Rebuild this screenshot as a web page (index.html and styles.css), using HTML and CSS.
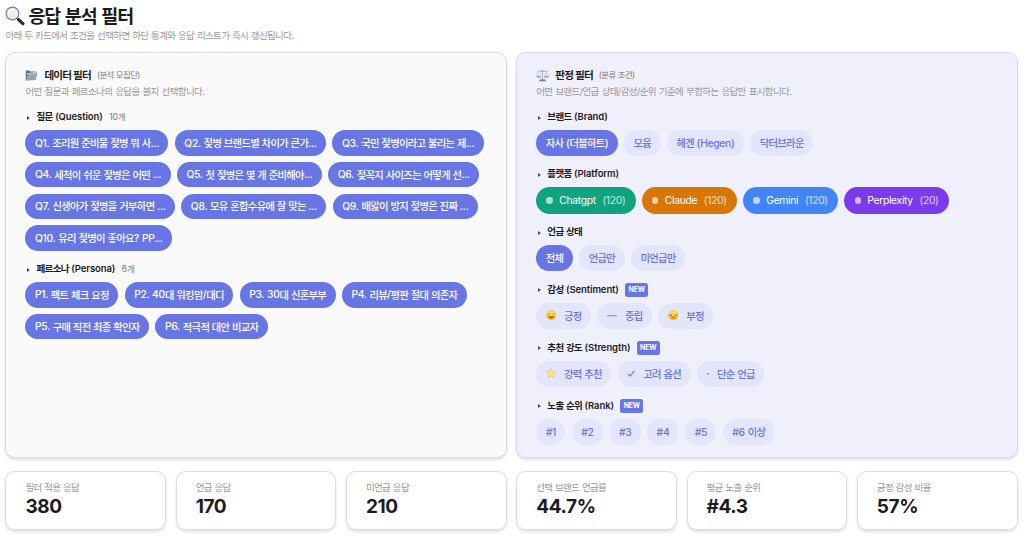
FILE: index.html
```html
<!DOCTYPE html>
<html lang="ko">
<head>
    <meta charset="UTF-8">
    <meta name="viewport" content="width=device-width, initial-scale=1.0">
    <title>응답 분석 필터</title>
    <link rel="stylesheet" href="styles.css">
</head>
<body>

    <header>
        <h1>
            <svg class="icon-search" viewBox="0 0 20 20">
                <path d="M12.2 12.2l1.7 1.7" stroke="#777" stroke-width="1.6"/>
                <path d="M13.6 13.6l4.3 4" stroke="#222" stroke-width="3.2" stroke-linecap="round"/>
                <path d="M13.9 13.2l4 3.7" stroke="#777" stroke-width=".6" stroke-linecap="round"/>
                <circle cx="7.5" cy="7.5" r="6.4" fill="#e9f1f6" stroke="#6d7478" stroke-width="1.1"/>
                <circle cx="7.5" cy="7.5" r="5.5" fill="none" stroke="#c9d0d4" stroke-width=".6"/>
                <path d="M4 7.2a4 4 0 0 1 3.6-3.6" fill="none" stroke="#fff" stroke-width="1.2" stroke-linecap="round"/>
            </svg>
            <span>응답 분석 필터</span>
        </h1>
        <p class="subtitle">아래 두 카드에서 조건을 선택하면 하단 통계와 응답 리스트가 즉시 갱신됩니다.</p>
    </header>

    <main class="filters">
        <section class="card">
            <h2>
                <svg class="icon-card" viewBox="0 0 13 13">
                  <path d="M.7 11.5V2.3q0-.8.8-.8h2.7l1 1h5.3q.8 0 .8.8v1.5z" fill="#61717d"/>
                  <path d="M2 4.2l9-1.1v2H2z" fill="#f4f6f7"/>
                  <path d="M.8 11.8L2.6 5q.2-.6.9-.7l8.5-.8q.7 0 .5.7l-1.7 6.2q-.2.6-.8.7z" fill="#91a5b2"/>
                  <path d="M2.9 5.2l9-.9" stroke="#bdcbd3" stroke-width=".7"/>
                </svg>
                <span>데이터 필터</span>
                <small>(분석 모집단)</small>
            </h2>
            <p class="desc">어떤 질문과 페르소나의 응답을 볼지 선택합니다.</p>

            <div class="group">
                <h3><i class="arrow"></i><span>질문 <b>(Question)</b></span><small><b>10</b>개</small></h3>
                <div class="chips">
                    <button class="chip on"><b>Q1. </b>조리원 준비물 젖병 뭐 사<b>...</b></button>
                    <button class="chip on"><b>Q2. </b>젖병 브랜드별 차이가 큰가<b>...</b></button>
                    <button class="chip on"><b>Q3. </b>국민 젖병이라고 불리는 제<b>...</b></button>
                    <button class="chip on"><b>Q4. </b>세척이 쉬운 젖병은 어떤 <b>...</b></button>
                    <button class="chip on"><b>Q5. </b>첫 젖병은 몇 개 준비해야<b>...</b></button>
                    <button class="chip on"><b>Q6. </b>젖꼭지 사이즈는 어떻게 선<b>...</b></button>
                    <button class="chip on"><b>Q7. </b>신생아가 젖병을 거부하면 <b>...</b></button>
                    <button class="chip on"><b>Q8. </b>모유 혼합수유에 잘 맞는 <b>...</b></button>
                    <button class="chip on"><b>Q9. </b>배앓이 방지 젖병은 진짜 <b>...</b></button>
                    <button class="chip on"><b>Q10. </b>유리 젖병이 좋아요<b>? PP...</b></button>
                </div>
            </div>

            <div class="group">
                <h3><i class="arrow"></i><span>페르소나 <b>(Persona)</b></span><small><b>6</b>개</small></h3>
                <div class="chips">
                    <button class="chip on"><b>P1. </b>팩트 체크 요정</button>
                    <button class="chip on"><b>P2. 40</b>대 워킹맘<b>/</b>대디</button>
                    <button class="chip on"><b>P3. 30</b>대 신혼부부</button>
                    <button class="chip on"><b>P4. </b>리뷰<b>/</b>평판 절대 의존자</button>
                    <button class="chip on"><b>P5. </b>구매 직전 최종 확인자</button>
                    <button class="chip on"><b>P6. </b>적극적 대안 비교자</button>
                </div>
            </div>
        </section>

        <section class="card judge">
            <h2>
                <svg class="icon-card" viewBox="0 0 13 13" fill="none" stroke="#8195a5" stroke-width=".7">
                    <path d="M6.5.6v10M1.5 2.3h10"/>
                    <path d="M2.7 2.3L.8 7.2M2.7 2.3l1.9 4.9M10.3 2.3L8.4 7.2M10.3 2.3l1.9 4.9" stroke="#a9b7c2" stroke-width=".5"/>
                    <path d="M.5 7.2h4.3q-.4 1.4-2.1 1.4T.5 7.2zM8.2 7.2h4.3q-.4 1.4-2.1 1.4T8.2 7.2z" fill="#c3ced6"/>
                    <path d="M3.2 12.1h6.6l-1-1.5H4.2z" fill="#71818e"/>
                </svg>
                <span>판정 필터</span>
                <small>(분류 조건)</small>
            </h2>
            <p class="desc">어떤 브랜드/언급 상태/감성/순위 기준에 부합하는 응답만 표시합니다.</p>

            <div class="group">
                <h3><i class="arrow"></i><span>브랜드 <b>(Brand)</b></span></h3>
                <div class="chips">
                    <button class="chip on">자사 <b>(</b>더블하트<b>)</b></button>
                    <button class="chip">모윰</button>
                    <button class="chip">헤겐 <b>(Hegen)</b></button>
                    <button class="chip">닥터브라운</button>
                </div>
            </div>

            <div class="group">
                <h3><i class="arrow"></i><span>플랫폼 <b>(Platform)</b></span></h3>
                <div class="chips">
                    <button class="chip platform chatgpt"><i class="dot"></i><b>Chatgpt</b><b class="count">(120)</b></button>
                    <button class="chip platform claude"><i class="dot"></i><b>Claude</b><b class="count">(120)</b></button>
                    <button class="chip platform gemini"><i class="dot"></i><b>Gemini</b><b class="count">(120)</b></button>
                    <button class="chip platform perplexity"><i class="dot"></i><b>Perplexity</b><b class="count">(20)</b></button>
                </div>
            </div>

            <div class="group">
                <h3><i class="arrow"></i><span>언급 상태</span></h3>
                <div class="chips">
                    <button class="chip on">전체</button>
                    <button class="chip">언급만</button>
                    <button class="chip">미언급만</button>
                </div>
            </div>

            <div class="group">
                <h3><i class="arrow"></i><span>감성 <b>(Sentiment)</b></span><em class="new">NEW</em></h3>
                <div class="chips">
                    <button class="chip with-icon">
                        <svg viewBox="0 0 10 10">
                            <circle cx="5" cy="5" r="4.8" fill="#fbb829"/>
                            <ellipse cx="5" cy="3" rx="3.6" ry="2.4" fill="#ffdc55"/>
                            <path d="M2.4 4q.7-1 1.4 0M6.2 4q.7-1 1.4 0" fill="none" stroke="#704018" stroke-width=".7"/>
                            <path d="M2.3 5.8q2.7 1.2 5.4 0Q7 8 5 8T2.3 5.8z" fill="#86471a"/>
                        </svg>긍정
                    </button>
                    <button class="chip with-icon">
                        <svg viewBox="0 0 10 10"><path d="M0 5.5h10" stroke="#6f7be8" stroke-width=".9"/></svg>중립
                    </button>
                    <button class="chip with-icon">
                        <svg viewBox="0 0 10 10">
                            <circle cx="5" cy="5" r="4.8" fill="#fbb42a"/>
                            <ellipse cx="5" cy="3" rx="3.6" ry="2.4" fill="#ffdc5c"/>
                            <path d="M1.9 4.6q1 .7 2 0M6.1 4.6q1 .7 2 0" fill="none" stroke="#704018" stroke-width=".8"/>
                            <path d="M3.5 7.5q1.5-1.4 3 0" fill="none" stroke="#704018" stroke-width=".7"/>
                        </svg>부정
                    </button>
                </div>
            </div>

            <div class="group">
                <h3><i class="arrow"></i><span>추천 강도 <b>(Strength)</b></span><em class="new">NEW</em></h3>
                <div class="chips">
                    <button class="chip with-icon">
                        <svg viewBox="0 0 10 10"><path d="M5 .5l1.3 3 3.2.3-2.4 2.1.7 3.3L5 7.5 2.2 9.2l.7-3.3L.5 3.8l3.2-.3z" fill="#ffe886" stroke="#efb74c" stroke-width=".6" stroke-linejoin="round"/></svg>강력 추천
                    </button>
                    <button class="chip with-icon check">
                        <svg viewBox="0 0 8 10"><path d="M.8 5.6l2 2.2 4.2-5" fill="none" stroke="#6873e2" stroke-width="1"/></svg>고려 옵션
                    </button>
                    <button class="chip with-icon bullet">
                        <svg viewBox="0 0 3 10"><circle cx="1.7" cy="5.5" r=".85" fill="#6873e2"/></svg>단순 언급
                    </button>
                </div>
            </div>

            <div class="group">
                <h3><i class="arrow"></i><span>노출 순위 <b>(Rank)</b></span><em class="new">NEW</em></h3>
                <div class="chips">
                    <button class="chip"><b>#1</b></button>
                    <button class="chip"><b>#2</b></button>
                    <button class="chip"><b>#3</b></button>
                    <button class="chip"><b>#4</b></button>
                    <button class="chip"><b>#5</b></button>
                    <button class="chip"><b>#6 </b>이상</button>
                </div>
            </div>
        </section>
    </main>

    <section class="stats">
        <div class="stat"><span>필터 적용 응답</span><strong>380</strong></div>
        <div class="stat"><span>언급 응답</span><strong>170</strong></div>
        <div class="stat"><span>미언급 응답</span><strong>210</strong></div>
        <div class="stat"><span>선택 브랜드 언급률</span><strong>44.7%</strong></div>
        <div class="stat"><span>평균 노출 순위</span><strong>#4.3</strong></div>
        <div class="stat"><span>긍정 감성 비율</span><strong>57%</strong></div>
    </section>

</body>
</html>
```
FILE: styles.css
```css
* {
    box-sizing: border-box;
}
body {
    margin: 0;
    padding: 5px 6.4px 0 5.4px;
    height: 539px;
    overflow: hidden;
    background: #fff;
    color: #1c1c1e;
    font-family: Inter, "Noto Sans CJK KR", sans-serif;
    font-size: 10.3px;
    letter-spacing: -0.065em;
    word-spacing: 0.05em;
}
h1, h2, h3, p {
    margin: 0;
}
b {
    font-weight: inherit;
    letter-spacing: -0.03em;
    white-space: pre;
}
h1 {
    display: flex;
    align-items: center;
    gap: 3px;
    height: 22px;
    font-size: 18.4px;
    line-height: 22px;
    font-weight: 700;
    letter-spacing: -0.058em;
    word-spacing: 0.08em;
    white-space: nowrap;
}
.icon-search {
    width: 20px;
    height: 20px;
}
.subtitle {
    height: 14px;
    margin: 2.2px 0 9.2px;
    color: #9a9a9c;
    font-size: 9.5px;
    line-height: 14px;
    letter-spacing: -0.068em;
    word-spacing: 0.07em;
}

/* filter cards */
.filters {
    display: grid;
    grid-template-columns: 1fr 1fr;
    gap: 9.5px;
    height: 406px;
}
.card {
    padding: 14.3px 19px 0;
    border: 1px solid #dddddf;
    border-radius: 10px;
    background: #fafafa;
    box-shadow: 0 1.5px 3px rgba(0, 0, 0, 0.12);
}
.card.judge {
    background: #f0f0fc;
    border-color: #d7daf7;
}
h2 {
    display: flex;
    align-items: center;
    height: 15px;
    font-size: 10.6px;
    line-height: 15px;
    font-weight: 700;
    letter-spacing: -0.08em;
    word-spacing: 0.03em;
    white-space: nowrap;
}
h2 small {
    margin-left: 6px;
    color: #77777a;
    font-size: 8.4px;
    font-weight: 400;
    letter-spacing: -0.065em;
}
.icon-card {
    width: 13px;
    height: 13px;
    margin-right: 6px;
}
.desc {
    height: 13px;
    margin: 2.4px 0 13.4px;
    color: #99999c;
    font-size: 9.5px;
    line-height: 13px;
    letter-spacing: -0.066em;
    word-spacing: 0.09em;
}
.group {
    margin-bottom: 12.65px;
}
h3 {
    display: flex;
    align-items: center;
    min-height: 12.6px;
    margin-bottom: 6.2px;
    font-size: 9.5px;
    line-height: 12.6px;
    font-weight: 600;
    word-spacing: 0.08em;
    white-space: nowrap;
}
h3 b {
    letter-spacing: -0.01em;
}
h3 small {
    margin-left: 6.5px;
    color: #77777a;
    font-size: 8.5px;
    font-weight: 400;
}
.arrow {
    width: 0;
    margin: 0 6.3px 0 1.8px;
    border-left: 3.2px solid #4c4c50;
    border-top: 2.9px solid transparent;
    border-bottom: 2.9px solid transparent;
}
.new {
    height: 13.8px;
    margin-left: 6.5px;
    padding: 0 3.2px;
    border-radius: 2.5px;
    background: #6875e5;
    color: #fff;
    font-size: 7px;
    font-style: normal;
    font-weight: 700;
    line-height: 13.8px;
    letter-spacing: -0.03em;
}

/* chips */
.chips {
    display: flex;
    flex-wrap: wrap;
    gap: 6.3px;
}
.chip {
    display: flex;
    align-items: center;
    height: 25.4px;
    padding: 0 9.5px 0.8px;
    border: 0;
    border-radius: 13px;
    background: #e3e5fa;
    color: #6873e2;
    font: inherit;
    font-weight: 500;
    letter-spacing: inherit;
    word-spacing: inherit;
    white-space: pre;
    cursor: pointer;
}
.chip.on {
    background: #6875e5;
    color: #fff;
}
.chip.platform {
    height: 26.8px;
    padding: 0 10.2px;
    border-radius: 14px;
    color: #fff;
    font-weight: 400;
}
.chatgpt {
    background: #10a37f;
}
.claude {
    background: #d97706;
}
.gemini {
    background: #4285f4;
}
.perplexity {
    background: #7c3aed;
}
.dot {
    width: 6.3px;
    height: 6.3px;
    margin-right: 6.5px;
    border-radius: 50%;
    background: rgba(255, 255, 255, 0.65);
}
.count {
    margin-left: 6.7px;
    opacity: 0.75;
}
.with-icon {
    white-space: nowrap;
}
.with-icon svg {
    width: 10.5px;
    height: 10.5px;
    margin-right: 7.7px;
}
.check svg {
    width: 8.5px;
}
.bullet svg {
    width: 3px;
}

/* stats */
.stats {
    display: grid;
    grid-template-columns: repeat(6, 1fr);
    gap: 9.5px;
    margin-top: 12.8px;
}
.stat {
    display: flex;
    flex-direction: column;
    height: 58.4px;
    padding: 9px 19px 0;
    border: 1px solid #dddddf;
    border-radius: 9.5px;
    box-shadow: 0 1.5px 3px rgba(0, 0, 0, 0.12);
}
.stat span {
    color: #99999c;
    font-size: 9.5px;
    line-height: 14px;
    word-spacing: 0.07em;
}
.stat strong {
    font-size: 19px;
    line-height: 24px;
    letter-spacing: -0.02em;
}
```
